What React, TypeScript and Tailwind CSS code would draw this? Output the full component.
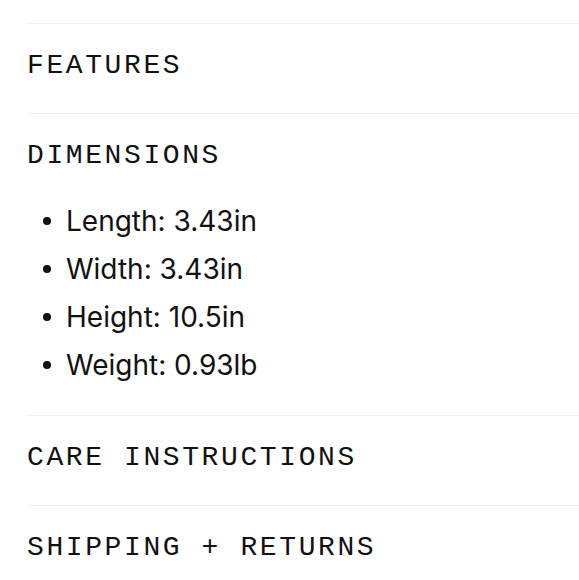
import React from 'react';

const sections = [
  { title: 'FEATURES', open: false, items: [] as string[] },
  {
    title: 'DIMENSIONS',
    open: true,
    items: ['Length: 3.43in', 'Width: 3.43in', 'Height: 10.5in', 'Weight: 0.93lb'],
  },
  { title: 'CARE INSTRUCTIONS', open: false, items: [] as string[] },
  { title: 'SHIPPING + RETURNS', open: false, items: [] as string[] },
];

export default function App() {
  return (
    <div className="min-h-screen bg-white pt-[23px] pl-[27px] text-[#111111] overflow-hidden">
      {sections.map(s => (
        <div key={s.title} className={`border-t border-[#eeeeee] ${s.open ? 'pb-[26px]' : 'pb-[6px]'}`}>
          <div className="h-[83px] flex items-center">
            <h3
              className="text-[28px] leading-none tracking-[2.6px] whitespace-nowrap"
              style={{ fontFamily: '"Liberation Mono", monospace' }}
            >
              {s.title}
            </h3>
          </div>
          {s.open && (
            <ul className="pl-[16px]">
              {s.items.map(item => (
                <li key={item} className="h-[48px] flex items-center gap-[15px]">
                  <span className="w-[8px] h-[8px] rounded-full bg-[#111111]" />
                  <span className="text-[28px] leading-none" style={{ fontFamily: 'Inter, sans-serif' }}>
                    {item}
                  </span>
                </li>
              ))}
            </ul>
          )}
        </div>
      ))}
    </div>
  );
}
